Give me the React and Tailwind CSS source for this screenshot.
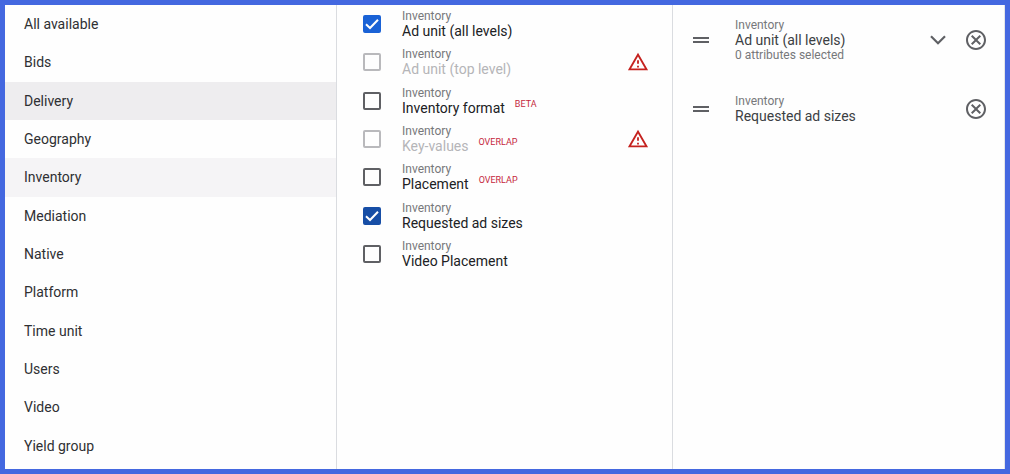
import { useState } from 'react';
import { MdDragHandle, MdOutlineCancel, MdOutlineWarningAmber } from 'react-icons/md';

const categories = [
  'All available',
  'Bids',
  'Delivery',
  'Geography',
  'Inventory',
  'Mediation',
  'Native',
  'Platform',
  'Time unit',
  'Users',
  'Video',
  'Yield group',
];

const dimensions = [
  { id: 'ad-unit-all', name: 'Ad unit (all levels)', box: 'checked:bg-[#1a62d6] checked:border-[#1a62d6]' },
  { id: 'ad-unit-top', name: 'Ad unit (top level)', disabled: true },
  { id: 'format', name: 'Inventory format', tag: 'BETA' },
  { id: 'key-values', name: 'Key-values', tag: 'OVERLAP', disabled: true },
  { id: 'placement', name: 'Placement', tag: 'OVERLAP' },
  { id: 'ad-sizes', name: 'Requested ad sizes', box: 'checked:bg-[#174ea6] checked:border-[#174ea6]' },
  { id: 'video-placement', name: 'Video Placement' },
];

// Row background for a category in the left column
function categoryColor(name, active) {
  if (name === active) return 'bg-[#eeedef]';
  if (name === 'Inventory') return 'bg-[#f5f4f6]';
  return 'hover:bg-[#f5f4f6]';
}

function CategoryList() {
  const [active, setActive] = useState('Delivery');

  return (
    <nav className="grid grid-rows-12 border-r border-[#dadce0] pb-1">
      {categories.map((name) => (
        <button
          key={name}
          type="button"
          onClick={() => setActive(name)}
          className={`flex items-center px-[19px] text-left text-sm leading-5 text-[#2f3033] ${categoryColor(name, active)}`}
        >
          {name}
        </button>
      ))}
    </nav>
  );
}

function DimensionRow({ item, checked, onToggle }) {
  return (
    <div className="flex items-center pl-[25px] pr-[23px]">
      <span className="relative flex h-5 w-5 shrink-0 items-center justify-center">
        <input
          type="checkbox"
          id={item.id}
          checked={checked}
          disabled={item.disabled}
          onChange={onToggle}
          className={`h-[18px] w-[18px] appearance-none rounded-xs border-2 border-[#5f6064] disabled:border-[#b9b9bc] ${item.box || 'checked:bg-[#1a62d6]'}`}
        />
        {checked && (
          <svg viewBox="0 0 18 18" className="pointer-events-none absolute h-[18px] w-[18px]" fill="none" stroke="white" strokeWidth="2">
            <path d="M3 9.3 7 13 15 4.8" />
          </svg>
        )}
      </span>
      <label htmlFor={item.id} className="ml-5 flex-1">
        <span className="block text-xs leading-[14px] text-[#77787b]">Inventory</span>
        <span className={`flex text-sm leading-4 ${item.disabled ? 'text-[#b5b5b8]' : 'text-[#202124]'}`}>
          {item.name}
          {item.tag && <span className="ml-2.5 text-[9px] leading-2 text-[#c5283d]">{item.tag}</span>}
        </span>
      </label>
      {item.disabled && <MdOutlineWarningAmber className="h-[22px] w-[22px] text-[#c5221f]" />}
    </div>
  );
}

function SelectedRow({ name, detail, onRemove }) {
  return (
    <li className="flex h-[69px] items-center px-4">
      <MdDragHandle className="h-6 w-6 shrink-0 text-[#5f6064]" />
      <div className="ml-[22px] flex-1">
        <div className="text-xs leading-[14px] text-[#77787b]">Inventory</div>
        <div className="text-sm leading-4 text-[#3c4043]">{name}</div>
        {detail && <div className="text-xs leading-[14px] text-[#77787b]">{detail}</div>}
      </div>
      {detail && (
        <button type="button" aria-label="Expand" className="mr-[14px] flex h-6 w-6 items-center justify-center text-[#5f6064]">
          <svg viewBox="0 0 16 10" className="h-[10px] w-4" fill="none" stroke="currentColor" strokeWidth="2.2">
            <path d="M1 1.2 8 8.2 15 1.2" />
          </svg>
        </button>
      )}
      <button type="button" aria-label={`Remove ${name}`} onClick={onRemove} className="text-[#5f6064]">
        <MdOutlineCancel className="h-6 w-6" />
      </button>
    </li>
  );
}

export default function App() {
  const [selected, setSelected] = useState(['ad-unit-all', 'ad-sizes']);

  const toggle = (id) => {
    setSelected(selected.includes(id) ? selected.filter((s) => s !== id) : [...selected, id]);
  };

  return (
    <div className="grid min-h-screen grid-cols-[332fr_336fr_332fr] border-[5px] border-[#4468e0] bg-[#fefefe] font-[Roboto,sans-serif]">
      <CategoryList />
      <section className="grid grid-rows-12 border-r border-[#dadce0] pb-1">
        {dimensions.map((item) => (
          <DimensionRow
            key={item.id}
            item={item}
            checked={selected.includes(item.id)}
            onToggle={() => toggle(item.id)}
          />
        ))}
      </section>
      <ul className="border-r border-[#e4e5e8]">
        {selected.map((id) => (
          <SelectedRow
            key={id}
            name={dimensions.find((d) => d.id === id).name}
            detail={id === 'ad-unit-all' ? '0 attributes selected' : ''}
            onRemove={() => toggle(id)}
          />
        ))}
      </ul>
    </div>
  );
}
